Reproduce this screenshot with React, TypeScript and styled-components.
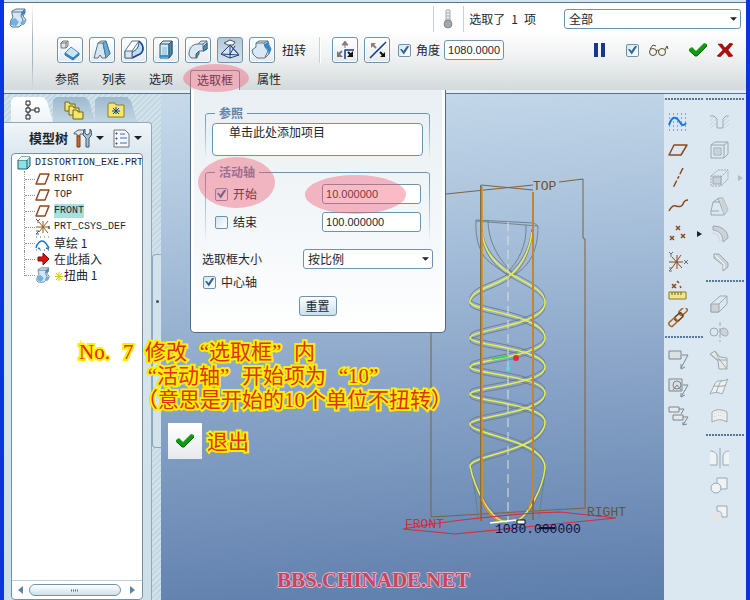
import React from 'react';
import styled, { createGlobalStyle, css } from 'styled-components';

const cjk = '"Noto Sans CJK SC", sans-serif';
const line = '#6f93ad';
const ink = '#1c2630';

const Global = createGlobalStyle`
  *, *::before, *::after { box-sizing: border-box; }
  body { margin: 0; font: 12px/16px ${cjk}; color: ${ink}; }
  button, input, select, textarea { font: inherit; color: inherit; margin: 0; }
  svg { display: block; flex: none; }
`;

/* ---------- window frame ---------- */

const Window = styled.div`
  position: relative;
  display: flex;
  flex-direction: column;
  min-height: 100vh;
  overflow: hidden;
  border: solid #0a35dc;
  border-width: 0 4px;
  background: #dbe8f2;
`;
const TopEdge = styled.div`
  height: 3px;
  background: #d3e6f1;
  border-bottom: 1px solid #55738a;
`;
const Header = styled.header`
  display: flex;
  background: linear-gradient(#fff 0, #fff 30%, #f0f2f2 62%, #d3dadc 100%);
`;
const HeaderEdge = styled.div`
  height: 4px;
  background: #e2edf4;
  border-bottom: 1px solid #55738a;
`;
const AppCell = styled.div`
  width: 29px;
  padding: 5px 0 0 4px;
  background: linear-gradient(#fff0, #aab6be 40%, #aab6be 70%, #fff0) right / 1px 100% no-repeat;
`;
const HeaderMain = styled.div`
  flex: 1;
  display: flex;
  flex-direction: column;
`;
const StatusRow = styled.div`
  display: flex;
  align-items: center;
  justify-content: flex-end;
  height: 31px;
  padding-right: 5px;
`;
const FeatureRow = styled.div`
  display: flex;
  align-items: center;
  height: 32px;
  padding: 0 12px 0 24px;
`;
const ToolGroup = styled.div`
  display: flex;
  align-items: center;
  gap: 6px;
`;
const Separator = styled.span`
  width: 2px;
  height: 26px;
  background: linear-gradient(90deg, #c9d1d6 50%, #fff 50%);
`;
const Thermo = styled.span`
  padding: 0 8px 0 6px;
`;
const Status = styled.span`
  display: flex;
  gap: 6px;
  padding: 0 28px 0 4px;
`;
const ToolButton = styled.button<{ $on?: boolean }>`
  display: grid;
  place-items: center;
  width: 26px;
  height: 26px;
  padding: 0;
  border: 1px solid ${line};
  border-radius: 3px;
  background: ${p => (p.$on ? 'linear-gradient(#b4c8d6, #d5e3ec)' : 'linear-gradient(#fff, #e3ebf1)')};
  box-shadow: ${p => (p.$on ? 'none' : 'inset 0 0 0 1px #fff')};
`;
const ToolTitle = styled.span`
  padding: 0 13px 0 7px;
`;
const PairGroup = styled(ToolGroup)`
  padding: 0 8px 0 11px;
`;
const CheckLabel = styled.label<{ $gap?: number }>`
  display: flex;
  align-items: center;
  gap: ${p => p.$gap ?? 5}px;
`;
const CheckBox = styled.input.attrs({ type: 'checkbox' })`
  appearance: none;
  display: grid;
  place-items: center;
  flex: none;
  width: 13px;
  height: 13px;
  border: 1px solid ${line};
  border-radius: 2px;
  background: linear-gradient(135deg, #d3e6f1, #fff);
  &:checked::before {
    content: '';
    width: 9px;
    height: 9px;
    background: #2f6492;
    clip-path: polygon(0 42%, 20% 38%, 38% 62%, 82% 0, 100% 12%, 42% 100%);
  }
`;
const NumberBox = styled.input<{ $w: number }>`
  width: ${p => p.$w}px;
  height: 20px;
  padding: 0 3px;
  border: 1px solid ${line};
  border-radius: 3px;
  background: #fff;
  font: 11px/18px "Liberation Sans", sans-serif;
`;
const AngleBox = styled(NumberBox)`
  margin-left: 4px;
`;
const Actions = styled.div`
  display: flex;
  align-items: center;
  gap: 9px;
  margin-left: auto;
`;
const IconButton = styled.button<{ $ml?: number }>`
  padding: 0;
  margin-left: ${p => p.$ml ?? 0}px;
  border: 0;
  background: none;
`;
const SelectWrap = styled.span<{ $w: number }>`
  display: grid;
  align-items: center;
  width: ${p => p.$w}px;
  & > * { grid-area: 1 / 1; }
  & > svg { justify-self: end; margin-right: 4px; pointer-events: none; }
`;
const Select = styled.select`
  appearance: none;
  width: 100%;
  height: 20px;
  padding: 0 4px;
  border: 1px solid ${line};
  border-radius: 3px;
  background: #fff;
  line-height: 16px;
`;
const TabRow = styled.nav`
  display: flex;
  gap: 11px;
  height: 20px;
  margin-top: 4px;
  padding-left: 16px;
`;
const TabSlot = styled.div`
  position: relative;
`;
const HeaderTab = styled.button<{ $open?: boolean }>`
  height: 20px;
  padding: 0 6px 2px;
  border: 0;
  background: none;
  ${p => p.$open && css`
    border: solid ${line};
    border-width: 1px 1px 0;
    border-radius: 3px 3px 0 0;
    background: #e8eef2;
  `}
`;

/* ---------- drop-down panel ---------- */

const Popup = styled.section`
  position: absolute;
  z-index: 5;
  top: 20px;
  left: 0;
  width: 256px;
  padding: 16px 12px 16px 11px;
  border: 1px solid #4f6c8c;
  border-top: 0;
  border-radius: 0 0 5px 5px;
  background: linear-gradient(#e9eff3, #f3f7f9 55%, #fff);
  box-shadow: inset 3px 0 #fff, inset -3px 0 #fff;
`;
const Group = styled.fieldset<{ $mb: number }>`
  min-width: 0;
  margin: 0 3px ${p => p.$mb}px;
  padding: 3px 7px 4px;
  border: 0;
  border-top: 1px solid ${line};
  border-radius: 4px;
  background:
    linear-gradient(${line}, #fff0) left / 1px 100% no-repeat,
    linear-gradient(${line}, #fff0) right / 1px 100% no-repeat;
`;
const Legend = styled.legend`
  margin-left: 3px;
  padding: 0 4px;
  line-height: 14px;
  font-weight: 700;
  color: #5f83ac;
`;
const Collector = styled.textarea`
  display: block;
  width: 100%;
  height: 33px;
  padding: 0 16px;
  border: 1px solid ${line};
  border-radius: 4px;
  resize: none;
  overflow: hidden;
  background: #fff;
  line-height: 16px;
`;
const FieldRow = styled.div`
  display: flex;
  align-items: center;
  justify-content: space-between;
  height: 20px;
  margin: 2px 2px 8px 3px;
`;
const SizeRow = styled.div`
  display: flex;
  align-items: center;
  justify-content: space-between;
  margin-bottom: 5px;
`;
const AxisRow = styled.div`
  padding: 0 0 6px 1px;
`;
const ResetButton = styled.button`
  display: block;
  width: 38px;
  height: 20px;
  margin: 0 auto;
  padding: 0;
  border: 1px solid ${line};
  border-radius: 3px;
  background: linear-gradient(#fff, #c9dfee);
  line-height: 16px;
`;

/* ---------- left navigator ---------- */

const Body = styled.main`
  flex: 1;
  display: flex;
  min-height: 0;
`;
const Navigator = styled.aside`
  display: flex;
  width: 157px;
  background: repeating-linear-gradient(135deg, #c3d7e3 0 2px, #d3e3ec 2px 4px);
`;
const NavMain = styled.div`
  display: flex;
  flex-direction: column;
  width: 148px;
`;
const NavTabs = styled.div`
  display: flex;
  height: 28px;
  padding: 3px 0 0 7px;
`;
const NavTab = styled.button<{ $on?: boolean }>`
  display: grid;
  place-items: center;
  width: 42px;
  padding: 0;
  border: 0;
  background: ${p => (p.$on ? 'linear-gradient(#fff, #edf3f7)' : 'linear-gradient(#9db9cd, #c3d6e2)')};
  clip-path: polygon(0 3px, 3px 0, 32px 0, 36px 4px, 42px 100%, 0 100%);
`;
const NavPanel = styled.div`
  flex: 1;
  display: flex;
  flex-direction: column;
  padding: 0 8px 0 7px;
  border: solid #8eabbe;
  border-width: 1px 1px 0 0;
  border-radius: 0 4px 0 0;
  background: linear-gradient(#f0f5f8, #dce8ef 30px, #cddfe9);
`;
const NavTitle = styled.div`
  display: flex;
  align-items: center;
  height: 30px;
  padding-left: 18px;
`;
const NavName = styled.strong`
  width: 44px;
  font-size: 13px;
`;
const MenuButton = styled.button<{ $w: number }>`
  display: flex;
  align-items: center;
  gap: 4px;
  width: ${p => p.$w}px;
  padding: 0;
  border: 0;
  background: none;
`;
const TreeBox = styled.div`
  flex: 1;
  display: flex;
  flex-direction: column;
  overflow: hidden;
  border: 1px solid ${line};
  border-radius: 4px;
  background: #fff;
`;
const Tree = styled.ul`
  flex: 1;
  margin: 0;
  padding: 1px 0 0 5px;
  list-style: none;
`;
const TreeItem = styled.li`
  display: flex;
  align-items: center;
  height: 16px;
  white-space: pre;
`;
const Branch = styled.span<{ $last?: boolean }>`
  align-self: flex-start;
  width: 11px;
  height: ${p => (p.$last ? 9 : 16)}px;
  margin-left: 7px;
  padding-top: 8px;
  border-left: 1px dotted #8b949b;
  &::before { content: ''; display: block; border-top: 1px dotted #8b949b; }
`;
const RootName = styled.span`
  margin-left: 4px;
  font: 10px/14px "Liberation Mono", monospace;
`;
const NodeName = styled.span<{ $sel?: boolean; $cjk?: boolean }>`
  margin-left: 4px;
  font: ${p => (p.$cjk ? `12px/14px ${cjk}` : '10px/14px "Liberation Mono", monospace')};
  background: ${p => (p.$sel ? '#a9dfe0' : 'none')};
`;
const Star = styled.span`
  display: inline-block;
  margin-right: 1px;
  vertical-align: -1px;
`;
const ScrollBar = styled.div`
  display: flex;
  align-items: center;
  justify-content: space-between;
  height: 19px;
  padding: 0 7px 0 6px;
  border-top: 1px solid #b8d2df;
`;
const Thumb = styled.span`
  display: grid;
  place-items: center;
  flex: 1;
  height: 12px;
  margin: 0 9px 0 6px;
  border: 1px solid ${line};
  border-radius: 6px;
  background: linear-gradient(#fff, #cddfea);
`;
const Sash = styled.div`
  flex: 1;
  padding-top: 160px;
`;
const SashGrip = styled.div`
  display: grid;
  align-items: start;
  justify-items: center;
  height: 194px;
  padding-top: 45px;
  border: 1px solid #8aa7bb;
  border-right: 0;
  border-radius: 4px 0 0 4px;
  background: #d3e3ec;
`;
const GripDot = styled.span`
  width: 3px;
  height: 3px;
  border-radius: 50%;
  background: #3d5366;
`;

/* ---------- model canvas ---------- */

const Canvas = styled.section`
  flex: 1;
  position: relative;
  background: linear-gradient(176deg, #c6daea, #a9c1db 28%, #8ba6c9 55%, #5d7dab);
`;
const Model = styled.svg`
  position: absolute;
  inset: 0;
  width: 100%;
  height: 100%;
  font: 13px "Liberation Mono", monospace;
`;
const Watermark = styled.div`
  position: absolute;
  left: 116px;
  bottom: 8px;
  font: 700 21px/24px "Liberation Serif", serif;
  color: #c8465a;
  text-shadow: 1px 0 #d9b8d4, -1px 0 #d9b8d4, 0 1px #d9b8d4, 0 -1px #d9b8d4;
`;

/* ---------- right tool strip ---------- */

const Strip = styled.aside`
  display: flex;
  width: 82px;
  background: #dbe8f2;
`;
const StripCol = styled.div`
  flex: 1;
`;
const Dots = styled.div`
  height: 3px;
  margin: 4px 1px 7px;
  background:
    radial-gradient(circle at 1px 1px, #54789a 1px, #fff0 1px) 0 0 / 3px 3px;
`;
const StripButton = styled.button`
  display: flex;
  align-items: center;
  gap: 8px;
  width: 41px;
  height: 28px;
  padding: 0 0 0 4px;
  border: 0;
  background: none;
`;

/* ---------- tutorial annotations ---------- */

const Spot = styled.span<{ $x: number; $y: number; $w: number; $h: number }>`
  position: absolute;
  z-index: 8;
  left: ${p => p.$x}px;
  top: ${p => p.$y}px;
  width: ${p => p.$w}px;
  height: ${p => p.$h}px;
  border-radius: 50%;
  background: #f2556e66;
  pointer-events: none;
`;
const Note = styled.div<{ $x: number; $y: number }>`
  position: absolute;
  z-index: 6;
  left: ${p => p.$x}px;
  top: ${p => p.$y}px;
  font: 21px/24px "Liberation Serif", "Noto Sans CJK SC", serif;
  color: #e0301a;
  white-space: nowrap;
  -webkit-text-stroke: 4px #ffee00;
  paint-order: stroke fill;
`;
const NoteLine = styled.div<{ $indent?: number }>`
  display: flex;
  height: 24px;
  padding-left: ${p => p.$indent ?? 0}px;
`;
const Cell = styled.span<{ $w: number; $end?: boolean }>`
  width: ${p => p.$w}px;
  text-align: ${p => (p.$end ? 'right' : 'left')};
`;
const ExitCard = styled.div`
  position: absolute;
  z-index: 6;
  left: 164px;
  top: 423px;
  display: grid;
  place-items: center;
  width: 34px;
  height: 36px;
  background: linear-gradient(#fff, #e6e9ec);
`;

/* ---------- icons ---------- */

type IconProps = { w?: number; h?: number; children: React.ReactNode };
const Icon = ({ w = 20, h = 20, children }: IconProps) => (
  <svg width={w} height={h} viewBox={`0 0 ${w} ${h}`} fill="none" strokeLinejoin="round" aria-hidden="true">
    {children}
  </svg>
);
const Down = ({ w = 7 }: { w?: number }) => (
  <svg width={w} height="4" viewBox="0 0 8 4" aria-hidden="true"><path d="M0 0h8L4 4z" fill="#1b2126" /></svg>
);
const GreenCheck = () => (
  <Icon w={18} h={14}><path d="M0 6l3-2 4 4 8-8 3 1v2L8 13H6L0 8z" fill="#129a12" /><path d="M1 8l5 5h2L18 3" stroke="#07600c" /></Icon>
);
const TwistIcon = ({ s = 18 }: { s?: number }) => (
  <svg width={s} height={s} viewBox="0 0 18 20" aria-hidden="true">
    <path d="M3 3l4-2h9v4l-2 3 3 4-2 4-3 1-2 2H3l-2-2 1-5 2-3-1-3z" fill="#d4e7f6" stroke="#5b7590" />
    <path d="M3 4h10l3-3M13 4l-1 4 2 4-2 4" fill="none" stroke="#5b7590" />
    <path d="M13 13l4-1-2 5-3 0zM2 12l4-2 4 4-3 4-5-1z" fill="#6fb2e2" />
    <path d="M13 4l3-2v3l-3 3z" fill="#2c89cf" />
  </svg>
);

const featureIcons = [
  { name: '移动', art: <><path d="M2 4l2-2h5v5L7 9H2z" fill="#e3e6e8" stroke="#6c747b" /><path d="M2 4h5v5M7 4l2-2" stroke="#6c747b" /><path d="M6 14l6-6 8 6-6 6z" fill="#c9e6f7" stroke="#5f88a8" /><path d="M6 14l8 5v2l-8-5zM14 19l6-5v2l-6 5z" fill="#2d8ed0" stroke="#2d7fb8" /></> },
  { name: '拔模', art: <><path d="M3 19L7 4l3-2h5l4 13-4 4h-4l-2-3-2 3z" fill="#d5e7f3" stroke="#5d7386" /><path d="M7 4h5l3 15" stroke="#5d7386" /><path d="M12 4l3-2 4 13-4 4z" fill="#5fb0dd" stroke="#5d7386" /></> },
  { name: '弯折', art: <><path d="M2 12L9 2h7l-7 10v7H2z" fill="#fff" stroke="#5d7386" /><path d="M9 13c5-2 7-5 7-11 6 6 5 12-1 14l-6 3z" fill="#bcdcf0" stroke="#24509e" /><path d="M16 2c6 5 5 12-1 14L9 19" stroke="#1c3f94" strokeWidth="1.5" /><path d="M2 12h7v7H2z" fill="#d5e7f3" stroke="#5d7386" /></> },
  { name: '拉伸', art: <><path d="M5 5l3-3h9v13l-3 4H5z" fill="#d3e9f5" stroke="#33536b" /><path d="M5 5h9v14" stroke="#33536b" /><path d="M7 8h5v8H7z" fill="#a9d3ea" /><path d="M14 5l3-3v13l-3 4z" fill="#3b90b8" stroke="#33536b" /><path d="M5 17h9" stroke="#3b90b8" strokeWidth="2" /></> },
  { name: '折弯', art: <><path d="M2 16c0-8 4-11 9-11l3-3h6v8l-3 2h-4c-2 0-3 2-3 7H4z" fill="#d9e8f2" stroke="#5d7386" /><path d="M11 5h5v5M16 5l4-3" stroke="#5d7386" /><path d="M12 12v3l-3 4v-4zM17 7l3-3v6l-4 2z" fill="#3d9fb4" stroke="#3f5b71" /></> },
  { name: '扭转框', on: true, art: <><path d="M11 6L2 15l9 4 9-3z" fill="#d7e6f4" stroke="#23407e" /><path d="M11 6l0 13M2 15l18 1M11 6l9 10M16 7l-5 8" stroke="#23407e" /><path d="M5 4l6-3 5 2-2 3-5 0z" fill="#fff" stroke="#44535f" /></> },
  { name: '造型', art: <><path d="M5 4l3-2h9l1 4 2 4-2 5-4 4H6l-4-4-1-4 4-3z" fill="#d9e8f4" stroke="#5d7386" /><path d="M5 4h8l4-2M13 4l1 4 3 4-3 6" stroke="#5d7386" /><path d="M14 5l3-2 1 4 2 3-3 6c1-4 0-6-3-8z" fill="#278bd0" /></> },
];

const Cube = () => (
  <Icon w={14} h={14}><path d="M1 4l3-3h9v9l-3 3H1z" fill="#8be3e6" stroke="#245c68" /><path d="M1 4h9v9M10 4l3-3" stroke="#245c68" /><path d="M1 4l3-3h9l-3 3z" fill="#dffafa" /></Icon>
);
const Plane = () => (
  <Icon w={15} h={14}><path d="M5 2h9l-4 10H1z" stroke="#8a4a20" strokeWidth="1.5" /></Icon>
);
const Csys = () => (
  <Icon w={15} h={16}><path d="M1 8h14M4 3l9 11M13 2L4 13M8 2v12" stroke="#9a5a20" /><path d="M1 0l2 2 2-2M3 2v2M13 7l2 3M15 7l-2 3M1 12h3l-3 3h3" stroke="#59636b" /></Icon>
);
const Sketch = () => (
  <Icon w={15} h={15}><path d="M1 1h14M1 14h14" stroke="#3c6eb4" strokeDasharray="1 3" /><path d="M1 12l1-3q5-8 10 0l2 3M3 12l2 1M11 12l3 1" stroke="#1478dc" strokeWidth="1.5" /></Icon>
);

const S = '#9ea7ad';
const F = '#cbd3d8';
const B = '#8a4a20';
type Tool = { name: string; art?: React.ReactNode; more?: boolean; faint?: boolean };
const datumTools: Tool[] = [
  { name: '草绘', art: <><path d="M1 2h19M1 6h19M1 10h19M1 14h19M1 18h19" stroke="#3c5faa" strokeDasharray="1 3" /><path d="M1 13C4 4 8 4 11 9s5 5 7 2" stroke="#1478e6" strokeWidth="2" /></> },
  { name: '平面', art: <path d="M6 5h13l-6 10H1z" stroke={B} strokeWidth="1.5" /> },
  { name: '轴', art: <path d="M15 0L5 20" stroke={B} strokeWidth="1.5" strokeDasharray="7 2 3 2" /> },
  { name: '曲线', art: <path d="M1 15c2-4 4-6 7-5s6 1 7-2 3-4 5-4" stroke={B} strokeWidth="1.5" /> },
  { name: '点', more: true, art: <path d="M8 2l4 4M12 2L8 6M2 12l4 4M6 12l-4 4M13 10l4 4M17 10l-4 4" stroke={B} strokeWidth="1.5" /> },
  { name: '坐标系', art: <><path d="M1 10h14M4 5l10 11M13 3L4 16M9 3v14" stroke={B} /><path d="M1 0l2 2 2-2M3 2v3M16 8l4 4M20 8l-4 4M1 16h3l-3 3h3" stroke="#65717a" /></> },
  { name: '分析', art: <><path d="M4 4l4 4M8 4L4 8M9 1l2 2M12 6l1 2" stroke={B} strokeWidth="1.5" /><path d="M1 12h17v7H1z" fill="#f0e68a" stroke="#8b7a22" /><path d="M4 12v3M7 12v3M10 12v3M13 12v3" stroke="#6c5e16" /></> },
  { name: '参照', art: <><rect x="11" y="1" width="9" height="5" rx="2" transform="rotate(-42 15 4)" stroke="#a5682c" strokeWidth="1.5" /><rect x="6" y="7" width="9" height="5" rx="2" transform="rotate(-42 10 9)" stroke="#704113" strokeWidth="1.5" /><rect x="1" y="12" width="9" height="5" rx="2" transform="rotate(-42 5 15)" stroke="#a5682c" strokeWidth="1.5" /></> },
];
const annotationTools: Tool[] = [
  { name: '注释', art: <><path d="M1 1h12v8H1z" fill="#dbe0e3" stroke="#7d868c" /><path d="M14 5h6l-7 13M13 14v5l4-2" stroke="#7d868c" /></> },
  { name: '图像注释', art: <><path d="M1 1h13v12H1z" fill="#dbe0e3" stroke="#7d868c" /><circle cx="9" cy="7" r="4" stroke="#7d868c" /><path d="M5 12l4-5 4 5M15 7h5l-7 12M13 15v4l4-2" stroke="#7d868c" /></> },
  { name: '传播', art: <><path d="M1 1h10v5H1zM5 9h10v5H5z" fill="#e6eaec" stroke="#7d868c" /><path d="M11 3h5l-3 5M15 11h5l-5 8M15 16v3l4-1" stroke="#7d868c" /></> },
];
const featureTools: Tool[] = [
  { name: '孔', art: <><path d="M1 4h4l3 3v9h6V7l3-3h3" stroke={S} /><path d="M1 9l4-4M1 13l6-6M2 16l5-5M15 9l5-5M15 13l5-5M16 16l4-4" stroke={F} /></> },
  { name: '壳', art: <><path d="M2 5l4-3h13v12l-4 4H2zM2 5h13v13M15 5l4-3M5 8h7v7H5z" stroke={S} /><path d="M6 9h5v5H6z" fill={F} /></> },
  { name: '筋', more: true, faint: true, art: <><path d="M2 8l7-6h10v9l-7 7H2zM12 9l7-7M2 8h10v10" stroke={S} strokeDasharray="2 1" /><path d="M4 9h8v7H4z" fill={F} stroke={S} /></> },
  { name: '拔模', art: <><path d="M4 6l6-4h4l5 12-4 5H2v-4zM9 2l6 16M4 6h7M2 15h8" stroke={S} /><path d="M11 4l3-2 5 12-4 4z" fill={F} /></> },
  { name: '倒圆角', art: <><path d="M4 2c9 0 15 5 15 12l-5 4C14 11 11 7 4 6z" fill={F} stroke={S} /><path d="M3 9c5 0 8 4 8 9" stroke={F} /></> },
  { name: '倒角', art: <><path d="M5 2h5l9 9v4l-5 4v-6L5 6z" fill={F} stroke={S} /><path d="M6 3l9 9v5" stroke="#fff" /></> },
];
const shapeTools: Tool[] = [
  { name: '拉伸', art: <><path d="M2 10l9-8h7v8l-8 8H2zM10 10l8-8" stroke={S} /><path d="M2 10h8v8H2z" fill={F} stroke={S} /></> },
  { name: '旋转', art: <><circle cx="5" cy="10" r="4" stroke={S} /><path d="M11 8c4-4 8-1 8 3s-4 4-8 0z" fill={F} stroke={S} /><path d="M11 0v20" stroke={S} strokeDasharray="4 2" /></> },
  { name: '扫描', art: <><path d="M1 4l5-3 5 6 7 1v11h-8l-1-8z" fill="#e4ebe9" stroke={S} /><path d="M1 4l8 6h9M6 1l4 8 8 10" stroke={S} /></> },
  { name: '边界混合', art: <><path d="M1 16C4 11 6 3 9 3s7 0 10-2c-2 3-3 9-6 15-4-2-8-2-12 0z" fill="#edf1f2" stroke={S} /><path d="M5 8c4 0 8 1 12-1M13 2c-3 3-4 8-6 13" stroke={S} /></> },
  { name: '造型', art: <><path d="M3 16V6c4-3 10-3 15 0v10c-5-3-10-3-15 0z" fill="#edf1f2" stroke={S} /><path d="M5 8c4-2 7-2 11 0M5 11c4-2 7-2 11 0" stroke={F} strokeDasharray="1 1" /></> },
];
const editTools: Tool[] = [
  { name: '镜像', art: <><path d="M1 3c5 0 7 3 7 6v8H1M20 3c-4 0-6 3-6 6v8h6" fill="#eef3f5" stroke={S} /><path d="M11 0v20" stroke={S} /></> },
  { name: '合并', art: <><path d="M8 2h10v11H8z" fill="#eef3f5" stroke={S} /><circle cx="7" cy="12" r="5" fill="#eef3f5" stroke={S} /></> },
  { name: '修剪', art: <><path d="M8 2h10v11h-5c0-4-1-6-5-6z" fill="#eef3f5" stroke={S} /><circle cx="7" cy="13" r="5" fill="#e3e6e9" /></> },
];

const ToolList = ({ tools }: { tools: Tool[] }) => (
  <>
    {tools.map(t => (
      <StripButton key={t.name} aria-label={t.name}>
        <Icon w={21} h={20}>{t.art}</Icon>
        {t.more && (
          <svg width="5" height="6" viewBox="0 0 5 6"><path d="M0 0l5 3-5 3z" fill={t.faint ? '#b3bcc2' : '#1b2126'} /></svg>
        )}
      </StripButton>
    ))}
  </>
);

/* Twisted strand: alternates between the left and right extremes of the helix. */
const leftY = [302, 338, 367, 394, 424, 466];
const rightY = [303, 338, 367, 393, 422, 468];
const strand = (startLeft: boolean) => {
  let left = !startLeft;
  let d = startLeft
    ? `M482 232C484 254 498 266 514 276C534 287 545 292 545 ${rightY[0]}`
    : `M532 232C529 254 520 268 508 277C492 287 470 290 470 ${leftY[0]}`;
  for (let i = 1; i < 6; i++) {
    left = !left;
    const from = left ? rightY[i - 1] : leftY[i - 1];
    const to = left ? leftY[i] : rightY[i];
    const h = to - from;
    d += left
      ? `C545 ${from + h * 0.65} 470 ${to - h * 0.25} 470 ${to}`
      : `C470 ${from + h * 0.25} 545 ${to - h * 0.65} 545 ${to}`;
  }
  d += left ? 'C474 486 490 522 507 522' : 'C543 488 527 519 515 521';
  return d;
};
const strands = [strand(true), strand(false)];

const ModelDrawing = () => (
  <Model fill="none" role="img" aria-label="模型">
    <g transform="translate(-161 -94)">
      <path d="M431 180V517L586 508M446 194L533 185M481 185L533 190M481 186V188M559 182L583 179V238L585 239V507" stroke="#84603c" />
      <g stroke="#6d7a88" strokeWidth="0.9">
        <path d="M476 221L538 226L534 223L476 220C475 240 480 256 492 264L510 277M488 220C488 240 497 256 508 268L514 276M538 226C538 250 530 266 514 275M526 225C527 246 518 262 506 274" />
        <path d="M470 466C473 482 477 498 478 520M546 468C543 488 541 500 539 518" />
        {strands.map(d => <path key={d} d={d} transform="translate(0 -3)" />)}
        {strands.map(d => <path key={d} d={d} transform="translate(0 3)" />)}
      </g>
      <g stroke="#e6ee4a" strokeWidth="1.5">{strands.map(d => <path key={d} d={d} />)}</g>
      <path d="M481 185V521M533 192V520" stroke="#8a6a44" strokeWidth="2" />
      <path d="M482 185V500Q486 512 498 521M533 192V496L528 510" stroke="#df8c1c" strokeWidth="1.5" />
      <path d="M508 222V522" stroke="#dbe5d5" strokeDasharray="9 5" />
      <path d="M403 529C450 520 520 513 560 512L616 518L455 534Z" stroke="#d62b3c" strokeWidth="1.2" />
      <path d="M490 523L516 520" stroke="#fff" strokeWidth="1.5" />
      <path d="M517 520h8v4h-8z" fill="#fff" stroke="#111" />
      <path d="M492 359l16-3" stroke="#39d646" strokeWidth="2" />
      <path d="M508 356v14" stroke="#54e0e6" />
      <circle cx="516" cy="358" r="3" fill="#dc3030" />
      <circle cx="508" cy="369" r="2" fill="#54e0e6" />
      <text x="533" y="190" fill="#6a5138">TOP</text>
      <text x="405" y="528" fill="#d62b3c">FRONT</text>
      <text x="587" y="516" fill="#6a5138">RIGHT</text>
      <text x="495" y="533" fill="#0a1040">1080.000000</text>
      <path d="M539 528h16" stroke="#0a1040" strokeWidth="2" />
    </g>
  </Model>
);

/* ---------- page ---------- */

const nodes: { icon: React.ReactNode; name: string; cjk?: boolean; sel?: boolean; fresh?: boolean }[] = [
  { icon: <Plane />, name: 'RIGHT' },
  { icon: <Plane />, name: 'TOP' },
  { icon: <Plane />, name: 'FRONT', sel: true },
  { icon: <Csys />, name: 'PRT_CSYS_DEF' },
  { icon: <Sketch />, name: '草绘 1', cjk: true },
  { icon: <Icon w={15} h={14}><path d="M3 5h5V1l6 6-6 6V9H3z" fill="#e01010" stroke="#8c0808" /></Icon>, name: '在此插入', cjk: true },
  { icon: <TwistIcon s={16} />, name: '扭曲 1', cjk: true, fresh: true },
];

export default function App() {
  return (
    <Window>
      <Global />
      <TopEdge />
      <Header>
        <AppCell><TwistIcon s={20} /></AppCell>
        <HeaderMain>
          <StatusRow>
            <Separator />
            <Thermo>
              <Icon w={14} h={20}><path d="M5 1h4v12H5z" fill="#eceeef" stroke="#a8adb0" /><circle cx="7" cy="15" r="4" fill="#a3a8aa" stroke="#84898c" /><path d="M5 4h4M5 7h4M5 10h4" stroke="#a8adb0" /></Icon>
            </Thermo>
            <Separator />
            <Status><span>选取了</span><span>1</span><span>项</span></Status>
            <SelectWrap $w={177}>
              <Select aria-label="过滤器"><option>全部</option></Select>
              <Down />
            </SelectWrap>
          </StatusRow>
          <FeatureRow>
            <ToolGroup>
              {featureIcons.map(f => (
                <ToolButton key={f.name} $on={f.on} aria-label={f.name}><Icon w={22} h={22}>{f.art}</Icon></ToolButton>
              ))}
            </ToolGroup>
            <ToolTitle>扭转</ToolTitle>
            <Separator />
            <PairGroup>
              <ToolButton aria-label="轴向">
                <Icon w={22} h={22}><path d="M11 20V11h9" stroke="#17388e" strokeWidth="1.5" /><path d="M11 9V3M8 6l3-4 3 4z" stroke="#8a7f7a" fill="#8a7f7a" /><path d="M8 12l-4 4" stroke="#777" strokeWidth="2" /><path d="M3 12v6h6z" fill="#777" /><path d="M14 13l4 4" stroke="#111" strokeWidth="2" /><path d="M19 12v6h-6z" fill="#111" /></Icon>
              </ToolButton>
              <ToolButton aria-label="反向">
                <Icon w={22} h={22}><path d="M4 19L20 3" stroke="#17388e" strokeWidth="1.5" /><path d="M5 4h5l-5 5z" fill="#8a7f7a" /><path d="M6 5l4 4" stroke="#8a7f7a" strokeWidth="2" /><path d="M19 13v5h-5z" fill="#111" /><path d="M14 13l4 4" stroke="#111" strokeWidth="2" /></Icon>
              </ToolButton>
            </PairGroup>
            <CheckLabel><CheckBox defaultChecked />角度</CheckLabel>
            <AngleBox $w={60} defaultValue="1080.000000" aria-label="角度值" />
            <Actions>
              <IconButton aria-label="暂停"><Icon w={13} h={14}><path d="M1 0h4v14H1zM8 0h4v14H8z" fill="#17388e" /></Icon></IconButton>
              <IconButton as="span" $ml={11}><CheckBox defaultChecked aria-label="预览" /></IconButton>
              <IconButton aria-label="眼镜">
                <Icon w={21} h={12}><circle cx="5" cy="8" r="3.5" stroke="#5a4d2a" /><circle cx="14" cy="8" r="3.5" stroke="#5a4d2a" /><path d="M8 7q1.5-2 3 0M2 5l3-4 3 1M17 6l2-4 1 3" stroke="#5a4d2a" /></Icon>
              </IconButton>
              <IconButton aria-label="确定" $ml={11}><GreenCheck /></IconButton>
              <IconButton aria-label="取消" $ml={1}><Icon w={17} h={14}><path d="M1 1h4l3 4 5-5 3 1-5 6 5 6-4 1-4-5-5 5-3-1 6-6z" fill="#b00c0c" stroke="#780606" strokeWidth="0.5" /></Icon></IconButton>
            </Actions>
          </FeatureRow>
          <TabRow>
            <HeaderTab>参照</HeaderTab>
            <HeaderTab>列表</HeaderTab>
            <HeaderTab>选项</HeaderTab>
            <TabSlot>
              <HeaderTab $open>选取框</HeaderTab>
              <Popup>
                <Group $mb={5}>
                  <Legend>参照</Legend>
                  <Collector readOnly aria-label="参照" defaultValue="单击此处添加项目" />
                </Group>
                <Group $mb={5}>
                  <Legend>活动轴</Legend>
                  <FieldRow>
                    <CheckLabel><CheckBox defaultChecked />开始</CheckLabel>
                    <NumberBox $w={99} defaultValue="10.000000" aria-label="开始值" />
                  </FieldRow>
                  <FieldRow>
                    <CheckLabel><CheckBox />结束</CheckLabel>
                    <NumberBox $w={99} defaultValue="100.000000" aria-label="结束值" />
                  </FieldRow>
                </Group>
                <SizeRow>
                  <label htmlFor="frame-size">选取框大小</label>
                  <SelectWrap $w={130}>
                    <Select id="frame-size"><option>按比例</option></Select>
                    <Down />
                  </SelectWrap>
                </SizeRow>
                <AxisRow><CheckLabel><CheckBox defaultChecked />中心轴</CheckLabel></AxisRow>
                <ResetButton>重置</ResetButton>
              </Popup>
            </TabSlot>
            <HeaderTab>属性</HeaderTab>
          </TabRow>
        </HeaderMain>
      </Header>
      <HeaderEdge />
      <Body>
        <Navigator>
          <NavMain>
            <NavTabs>
              <NavTab $on aria-label="模型树"><Icon w={16} h={20}><path d="M2 1h4v4H2zM2 8h4v4H2zM2 15h4v4H2zM11 8h4v4h-4zM4 5v3M4 12v3M6 10h5" stroke="#1b2126" /></Icon></NavTab>
              <NavTab aria-label="文件夹浏览器"><Icon w={20} h={20}>{[0, 4, 8].map(o => <path key={o} d={`M${1 + o} ${2 + o}h4l1 2h5v7h-10z`} fill="#f6e66a" stroke="#6e6420" />)}</Icon></NavTab>
              <NavTab aria-label="收藏夹"><Icon w={18} h={16}><path d="M1 3l1-2h6l1 2h8v12H1z" fill="#f6e66a" stroke="#8a7d26" /><path d="M9 5v7M5 9h8M6 6l6 6M12 6l-6 6" stroke="#1b3c9c" /></Icon></NavTab>
            </NavTabs>
            <NavPanel>
              <NavTitle>
                <NavName>模型树</NavName>
                <MenuButton $w={40} aria-label="设置">
                  <Icon w={19} h={20}><path d="M1 5l4-3h6v4H7v2H4V6H1z" fill="#dfe5e9" stroke="#5b656c" /><path d="M4 8h3v11H4z" fill="#c46b32" stroke="#7d3c16" /><path d="M12 1v4l2 2 3-2V1l2 3-1 4-2 2v9h-3v-9l-3-3 1-5z" fill="#a7c0d8" stroke="#3d566e" /></Icon>
                  <Down w={8} />
                </MenuButton>
                <MenuButton $w={30} aria-label="显示">
                  <Icon w={17} h={19}><path d="M1 1h11l4 4v13H1z" fill="#f5f7fa" stroke="#6b757d" /><path d="M7 5h5M7 9h7M7 14h7" stroke="#3c6eb4" /><path d="M3 4h1v1H3zM3 9h1v1H3zM3 14h1v1H3z" stroke="#39444c" /></Icon>
                  <Down w={8} />
                </MenuButton>
              </NavTitle>
              <TreeBox>
                <Tree>
                  <TreeItem><Cube /><RootName>DISTORTION_EXE.PRT</RootName></TreeItem>
                  {nodes.map((n, i) => (
                    <TreeItem key={n.name}>
                      <Branch $last={i === nodes.length - 1} />
                      {n.icon}
                      <NodeName $cjk={n.cjk} $sel={n.sel}>
                        {n.fresh && <Star><Icon w={8} h={9}><path d="M4 0v9M0 4.5h8M1 1l6 7M7 1L1 8" stroke="#d6c800" /></Icon></Star>}
                        {n.name}
                      </NodeName>
                    </TreeItem>
                  ))}
                </Tree>
                <ScrollBar>
                  <Icon w={5} h={8}><path d="M5 0v8L0 4z" fill="#5b87a3" /></Icon>
                  <Thumb><Icon w={8} h={3}><path d="M0 1.5h8" stroke="#5b7488" strokeWidth="2" strokeDasharray="1 1" /></Icon></Thumb>
                  <Icon w={5} h={8}><path d="M0 0v8l5-4z" fill="#5b87a3" /></Icon>
                </ScrollBar>
              </TreeBox>
            </NavPanel>
          </NavMain>
          <Sash><SashGrip><GripDot /></SashGrip></Sash>
        </Navigator>
        <Canvas>
          <ModelDrawing />
          <Watermark>BBS.CHINADE.NET</Watermark>
        </Canvas>
        <Strip>
          <StripCol>
            <Dots />
            <ToolList tools={datumTools} />
            <Dots />
            <ToolList tools={annotationTools} />
          </StripCol>
          <StripCol>
            <Dots />
            <ToolList tools={featureTools} />
            <Dots />
            <ToolList tools={shapeTools} />
            <Dots />
            <ToolList tools={editTools} />
          </StripCol>
        </Strip>
      </Body>

      <Spot $x={179} $y={64} $w={66} $h={28} />
      <Spot $x={194} $y={157} $w={77} $h={51} />
      <Spot $x={301} $y={175} $w={101} $h={39} />
      <Note $x={75} $y={340}>
        <NoteLine>
          <Cell $w={44}>No.</Cell><Cell $w={22}>7</Cell>修改<Cell $w={22} $end>“</Cell>选取框<Cell $w={22}>”</Cell>内
        </NoteLine>
        <NoteLine $indent={56}>
          <Cell $w={22} $end>“</Cell>活动轴<Cell $w={22}>”</Cell>开始项为<Cell $w={22} $end>“</Cell>10<Cell $w={22}>”</Cell>
        </NoteLine>
        <NoteLine $indent={58}>（意思是开始的10个单位不扭转）</NoteLine>
      </Note>
      <ExitCard><GreenCheck /></ExitCard>
      <Note $x={203} $y={430}>退出</Note>
    </Window>
  );
}
